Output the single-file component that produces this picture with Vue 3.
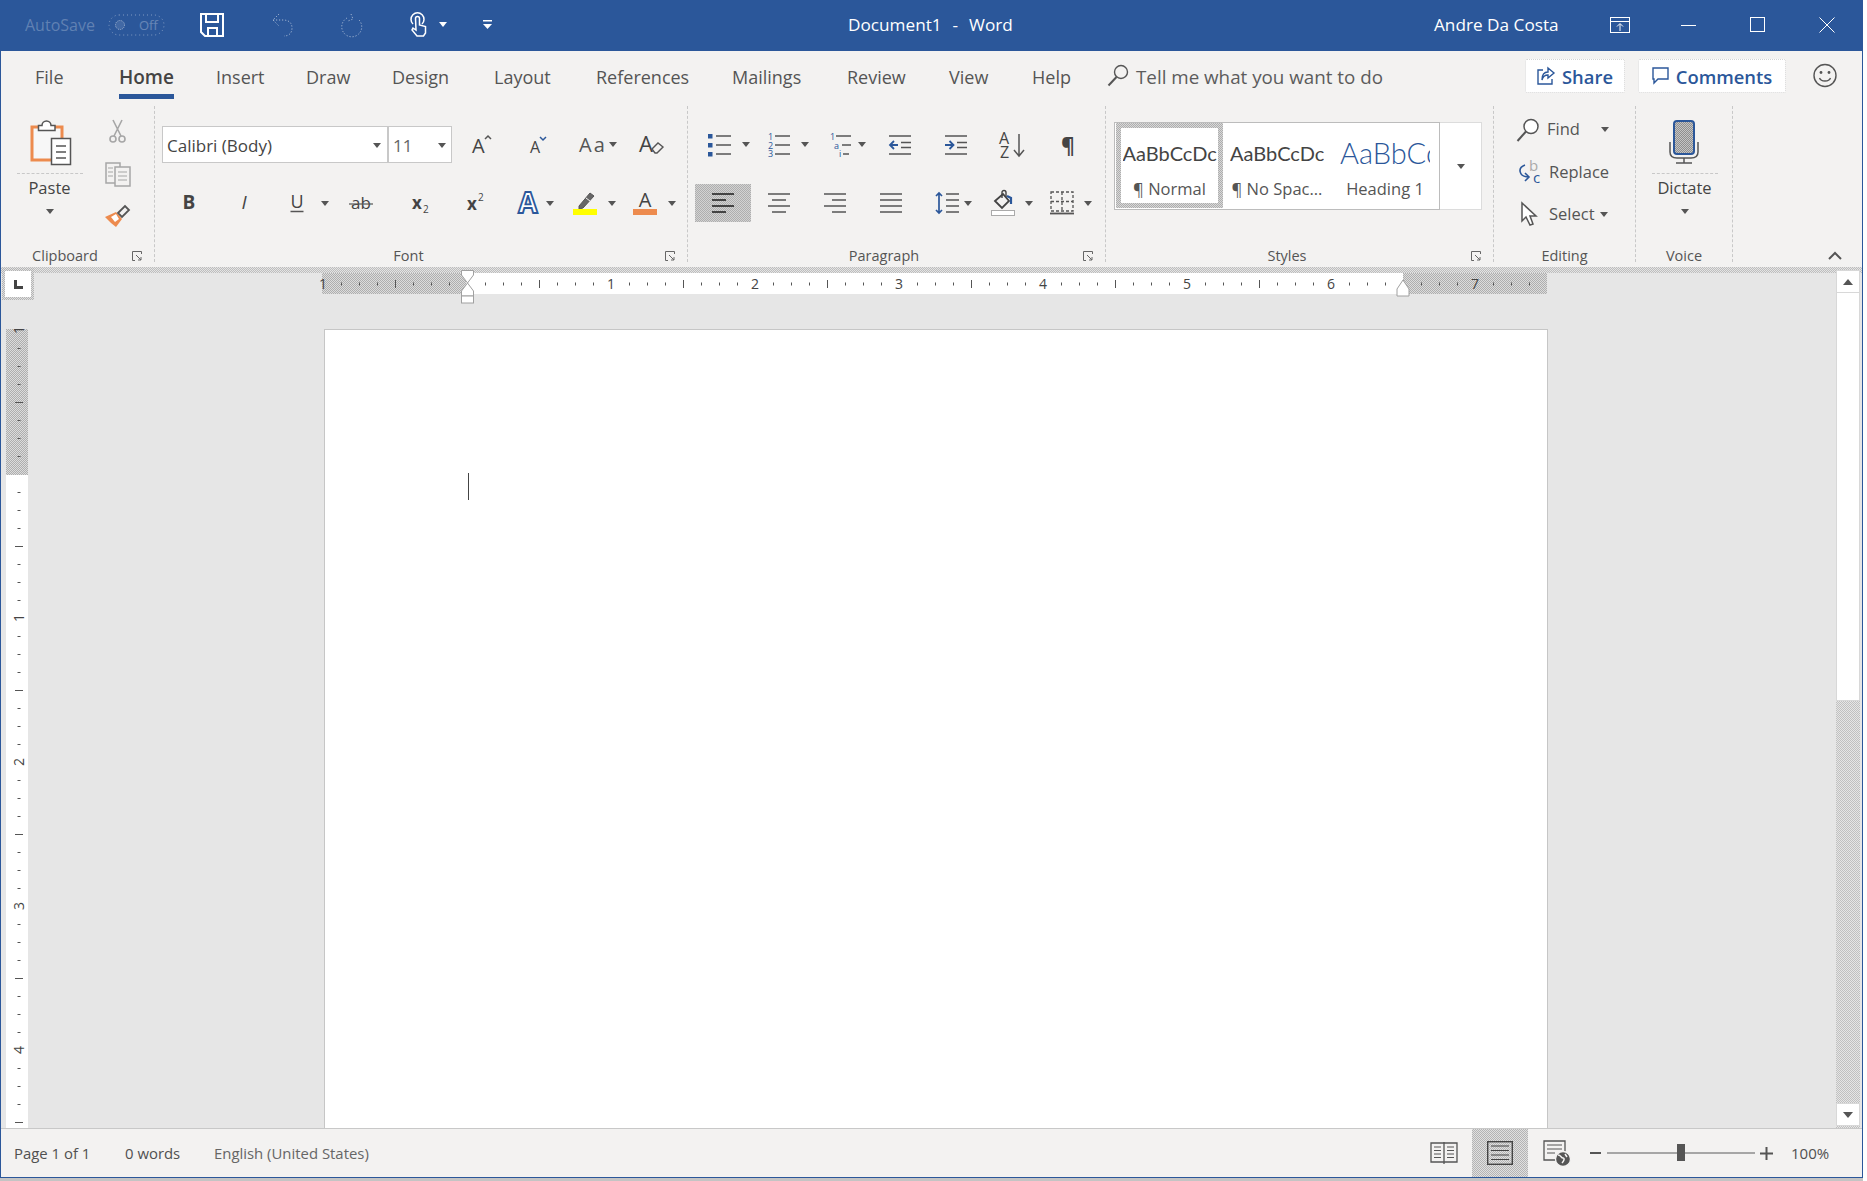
<script setup>
const tabs = ['File', 'Home', 'Insert', 'Draw', 'Design', 'Layout', 'References', 'Mailings', 'Review', 'View', 'Help']

const zeroX = 145
const hTicks = []
for (let i = -8; i <= 59; i++) {
  if (i === 0) continue
  const x = zeroX + i * 18
  if (i % 8 === 0) hTicks.push({ x, label: i < 0 ? String(-i / 8) : String(i / 8) })
  else hTicks.push({ x, h: i % 4 === 0 ? 8 : 3 })
}

const zeroY = 145
const vTicks = []
for (let i = -8; i <= 36; i++) {
  if (i === 0) continue
  const y = zeroY + i * 18
  if (i % 8 === 0) vTicks.push({ y, label: i < 0 ? String(-i / 8) : String(i / 8) })
  else vTicks.push({ y, w: i % 4 === 0 ? 8 : 3 })
}
</script>

<template>
  <div class="screen">
    <div class="window">
      <header class="titlebar">
        <span class="autosave">AutoSave</span>
        <svg width="57" height="24" viewBox="0 0 57 24" class="ghost">
          <rect x="1" y="2" width="55" height="20" rx="10" fill="none" stroke="#fff" stroke-dasharray="1 3" opacity=".4" />
          <circle cx="12" cy="12" r="4.500" fill="#fff" fill-opacity=".2" stroke="#fff" stroke-dasharray="1 1" opacity=".55" />
          <text x="31" y="17" font-size="13" fill="#fff" opacity=".28">Off</text>
        </svg>
        <svg width="24" height="24" viewBox="0 0 24 24" fill="none" stroke="#fff" stroke-width="2">
          <path d="M1 1h22v22H5l-4-4z" /><path d="M6 1v8h12V1" /><path d="M8 23v-8h9v8" />
        </svg>
        <svg width="22" height="24" viewBox="0 0 22 24" fill="none" stroke="#fff" stroke-dasharray="1.2 1.8" opacity=".55">
          <path d="M7 1 1 7l6 6M1 7h10c6 0 9 3 9 8s-3 8-8 8" />
        </svg>
        <svg width="24" height="24" viewBox="0 0 24 24" fill="none" stroke="#fff" stroke-dasharray="1.2 1.8" opacity=".55">
          <path d="M11 1l2 5-5 2M7 5a10 10 0 1 0 11 1" />
        </svg>
        <svg width="18" height="25" viewBox="0 0 18 25" fill="none" stroke="#fff" stroke-width="1.500">
          <path d="M3 12a6.500 6.500 0 1 1 9 0" /><path d="M5.500 6.500a2 2 0 0 1 4 0V13l6 1.500V21l-2 3H7l-5-6 1-2 3 2z" fill="#2b579a" />
        </svg>
        <i class="caret white"></i>
        <svg width="9" height="10" viewBox="0 0 9 10" fill="#fff"><rect y="0" width="9" height="1.500" /><path d="M0 4h9L4.500 9z" /></svg>
        <span class="doc-title">Document1&nbsp; -&nbsp; Word</span>
        <span class="user">Andre Da Costa</span>
        <svg width="20" height="16" viewBox="0 0 20 16" fill="none" stroke="#fff">
          <rect x=".5" y=".5" width="19" height="15" /><path d="M1 4.500h18M10 14V7M7 9.500l3-3 3 3" />
        </svg>
        <svg width="16" height="16" viewBox="0 0 16 16" stroke="#fff"><path d="M0 8.500h15" /></svg>
        <svg width="16" height="16" viewBox="0 0 16 16" fill="none" stroke="#fff"><rect x=".5" y=".5" width="14" height="14" /></svg>
        <svg width="16" height="16" viewBox="0 0 16 16" stroke="#fff"><path d="M.5.500l15 15M15.500.500l-15 15" /></svg>
      </header>

      <nav class="tabbar">
        <span v-for="t in tabs" :key="t" class="tab" :class="{ active: t === 'Home' }">{{ t }}</span>
        <svg width="22" height="24" viewBox="0 0 22 24" fill="none" stroke="#555" stroke-width="1.400">
          <circle cx="14" cy="8" r="6.500" /><path d="M9.500 13 1.500 21.500" stroke-width="2" />
        </svg>
        <span class="tell">Tell me what you want to do</span>
        <span class="action share">
          <svg width="18" height="18" viewBox="0 0 18 18" fill="none" stroke="#2b579a" stroke-width="1.400">
            <path d="M6 3H1v14h14v-5" /><path d="M11 1l6 5-6 5V8c-3 0-5 1-6 5 0-5 2-8 6-8z" />
          </svg>
          Share
        </span>
        <span class="action comments">
          <svg width="17" height="18" viewBox="0 0 17 18" fill="none" stroke="#2b579a" stroke-width="1.400">
            <path d="M1 1h15v11H6l-4 4v-4H1z" />
          </svg>
          Comments
        </span>
        <svg width="24" height="25" viewBox="0 0 24 25" fill="none" stroke="#555" stroke-width="1.400">
          <circle cx="12" cy="12.500" r="11" /><circle cx="8" cy="9.500" r="1.400" fill="#555" stroke="none" /><circle cx="16" cy="9.500" r="1.400" fill="#555" stroke="none" />
          <path d="M6.500 15c1.500 4 9.500 4 11 0" />
        </svg>
      </nav>

      <section class="ribbon">
        <div class="group g-clip">
          <div class="body split">
            <div class="large">
              <svg class="paste-ico" width="42" height="46" viewBox="0 0 42 46">
                <rect x="2" y="7" width="30" height="33" fill="#f7f7f7" stroke="#ed8b4e" stroke-width="3" />
                <path d="M8.500 10.500v-5H12a4.500 4.500 0 0 1 9 0h4v5z" fill="#fff" stroke="#555" stroke-width="1.500" />
                <rect x="21.500" y="18.500" width="19" height="26" fill="#fff" stroke="#555" stroke-width="1.500" />
                <path d="M26 26h10M26 32h10M26 38h10" stroke="#555" stroke-width="1.500" />
              </svg>
              <i class="dash"></i>
              <span class="large-label">Paste</span>
              <i class="caret"></i>
            </div>
            <div class="small-col">
              <svg width="17" height="24" viewBox="0 0 17 24" fill="none" stroke="#a6a6a6" stroke-width="1.600">
                <circle cx="4" cy="20" r="3" /><circle cx="13" cy="20" r="3" /><path d="M5 17 13 1M12 17 4 1" />
              </svg>
              <svg width="26" height="25" viewBox="0 0 26 25" stroke="#a6a6a6" fill="none" stroke-width="1.500">
                <rect x="1" y="1" width="14" height="20" /><rect x="10" y="5" width="15" height="19" fill="#f3f2f1" />
                <path d="M13 10h9M13 14h9M13 18h9M3 6h5M3 10h5M3 14h5" stroke-width="1.200" />
              </svg>
              <svg class="painter" width="26" height="23" viewBox="0 0 26 23">
                <polygon points="1,13 12,8 18,15 12,23 7,19" fill="#ed8b4e" />
                <polygon points="7,13 12,10 15,15 11,18" fill="#fff" />
                <path d="M14 9l7-7 4 4-7 7z" fill="#f3f2f1" stroke="#555" stroke-width="1.800" />
              </svg>
            </div>
          </div>
          <div class="label"><span>Clipboard</span><i class="launch"><svg width="10" height="10" viewBox="0 0 10 10" fill="none" stroke="#666"><path d="M9.500 3V.5H.5v9H3M4 4l5 5M9 6v3H6" /></svg></i></div>
        </div>

        <div class="group g-font">
          <div class="body">
            <div class="row font-row1">
              <div class="combo font-name"><span>Calibri (Body)</span><i class="caret"></i></div>
              <div class="combo font-size"><span>11</span><i class="caret"></i></div>
              <svg width="24" height="24" viewBox="0 0 24 24" class="ico">
                <text x="2" y="20" font-size="20">A</text><path d="M15 6l3-3 3 3" fill="none" stroke="#555" stroke-width="1.500" />
              </svg>
              <svg width="24" height="24" viewBox="0 0 24 24" class="ico">
                <text x="5" y="20" font-size="16">A</text><path d="M15 4l3 3 3-3" fill="none" stroke="#2b579a" stroke-width="1.500" />
              </svg>
              <span class="aa">Aa</span>
              <i class="caret"></i>
              <svg width="24" height="26" viewBox="0 0 24 26" class="ico">
                <text x="0" y="20" font-size="22">A</text><path d="M13 17l6-6 5 4-6 6h-2z" fill="#f3f2f1" stroke="#555" stroke-width="1.400" />
              </svg>
            </div>
            <div class="row font-row2">
              <svg width="24" height="26" viewBox="0 0 24 26" class="ico"><text x="12" y="19" text-anchor="middle" font-size="19" font-weight="700">B</text></svg>
              <svg width="24" height="26" viewBox="0 0 24 26" class="ico"><text x="12" y="19" text-anchor="middle" font-size="19" font-style="italic">I</text></svg>
              <svg width="24" height="26" viewBox="0 0 24 26" class="ico"><text x="12" y="18" text-anchor="middle" font-size="18">U</text><path d="M5.500 21.500h13" stroke="#555" stroke-width="1.500" /></svg>
              <i class="caret"></i>
              <svg width="24" height="26" viewBox="0 0 24 26" class="ico"><text x="12" y="19" text-anchor="middle" font-size="17">ab</text><path d="M0 14h24" stroke="#555" stroke-width="1.200" /></svg>
              <svg width="24" height="26" viewBox="0 0 24 26" class="ico"><text x="4" y="19" font-size="17" font-weight="700">x</text><text x="15" y="23" font-size="10" fill="#2b579a">2</text></svg>
              <svg width="24" height="26" viewBox="0 0 24 26" class="ico"><text x="3" y="20" font-size="17" font-weight="700">x</text><text x="14" y="11" font-size="10" fill="#444">2</text></svg>
              <svg width="24" height="26" viewBox="0 0 24 26"><text x="12" y="23" text-anchor="middle" font-size="28" font-weight="700" fill="#fff" stroke="#2b579a" stroke-width="1.800">A</text></svg>
              <i class="caret"></i>
              <svg width="24" height="26" viewBox="0 0 24 26">
                <path d="M6 16 17 3l4 3-11 12-4 1z" fill="#666" stroke="#555" /><path d="M13 8l4 3" stroke="#f3f2f1" />
                <rect y="19" width="24" height="6" fill="#ffff00" />
              </svg>
              <i class="caret"></i>
              <svg width="24" height="26" viewBox="0 0 24 26" class="ico"><text x="12" y="17" text-anchor="middle" font-size="20">A</text><rect y="19" width="24" height="6" fill="#ed8b4e" /></svg>
              <i class="caret"></i>
            </div>
          </div>
          <div class="label"><span>Font</span><i class="launch"><svg width="10" height="10" viewBox="0 0 10 10" fill="none" stroke="#666"><path d="M9.500 3V.5H.5v9H3M4 4l5 5M9 6v3H6" /></svg></i></div>
        </div>

        <div class="group g-para">
          <div class="body">
            <div class="row para-row1">
              <svg width="24" height="24" viewBox="0 0 24 24" fill="none" stroke="#555" stroke-width="1.500">
                <path d="M8 3h15M8 12h15M8 21h15" /><g fill="#2b579a" stroke="none"><rect x="0" y="1" width="4.500" height="4.500" /><rect x="0" y="10" width="4.500" height="4.500" /><rect x="0" y="19" width="4.500" height="4.500" /></g>
              </svg>
              <i class="caret"></i>
              <svg width="24" height="24" viewBox="0 0 24 24" class="ico-b">
                <path d="M8 3h15M8 12h15M8 21h15" fill="none" stroke="#555" stroke-width="1.500" />
                <text x="1" y="6.500" font-size="9">1</text><text x="1" y="15.500" font-size="9">2</text><text x="1" y="24" font-size="9">3</text>
              </svg>
              <i class="caret"></i>
              <svg width="24" height="24" viewBox="0 0 24 24" class="ico-b">
                <path d="M7 3h15M13 12h9M14 21h6" fill="none" stroke="#555" stroke-width="1.500" />
                <text x="1" y="6.500" font-size="9">1</text><text x="5" y="15.500" font-size="9">a</text><text x="10" y="24" font-size="9">i</text>
              </svg>
              <i class="caret"></i>
              <svg width="24" height="24" viewBox="0 0 24 24" fill="none" stroke="#555" stroke-width="1.500">
                <path d="M1 3h22M13 9.500h10M13 14.500h10M1 21h22" /><path d="M10 12H2M6 8l-4 4 4 4" stroke="#2b579a" stroke-width="1.800" />
              </svg>
              <svg width="24" height="24" viewBox="0 0 24 24" fill="none" stroke="#555" stroke-width="1.500">
                <path d="M1 3h22M13 9.500h10M13 14.500h10M1 21h22" /><path d="M1 12h8M5.500 8l4 4-4 4" stroke="#2b579a" stroke-width="1.800" />
              </svg>
              <svg width="26" height="26" viewBox="0 0 26 26" class="ico">
                <text x="-1" y="12" font-size="16" fill="#2b579a">A</text><text x="0" y="26" font-size="16">Z</text>
                <path d="M19 2v22M14 18l5 6 5-6" fill="none" stroke="#555" stroke-width="1.500" />
              </svg>
              <svg width="24" height="24" viewBox="0 0 24 24" class="ico"><text x="12" y="20" text-anchor="middle" font-size="21" font-weight="700">¶</text></svg>
            </div>
            <div class="row para-row2">
              <div class="active-btn">
                <svg width="24" height="24" viewBox="0 0 24 24" stroke="#444" stroke-width="2"><path d="M1 3h22M1 9h14M1 15h22M1 21h14" /></svg>
              </div>
              <svg width="24" height="24" viewBox="0 0 24 24" stroke="#555" stroke-width="1.500"><path d="M1 3h22M5 9h14M1 15h22M5 21h14" /></svg>
              <svg width="24" height="24" viewBox="0 0 24 24" stroke="#555" stroke-width="1.500"><path d="M1 3h22M9 9h14M1 15h22M9 21h14" /></svg>
              <svg width="24" height="24" viewBox="0 0 24 24" stroke="#555" stroke-width="1.500"><path d="M1 3h22M1 9h22M1 15h22M1 21h22" /></svg>
              <svg width="24" height="24" viewBox="0 0 24 24" fill="none" stroke="#555" stroke-width="1.500">
                <path d="M11 3h13M11 9h13M11 15h13M11 21h13" /><path d="M4 2v20M1 5l3-3 3 3M1 19l3 3 3-3" stroke="#2b579a" stroke-width="1.700" />
              </svg>
              <i class="caret"></i>
              <svg width="24" height="26" viewBox="0 0 24 26" fill="none" stroke="#444" stroke-width="1.800">
                <path d="M4 11l8-7 6 7-7 7z" /><path d="M11 8V2.500a2 2 0 0 1 4 0V7" stroke-width="1.400" /><path d="M20 14V8l-4-2" stroke="#2b579a" stroke-width="2.200" />
                <rect x=".5" y="20.500" width="23" height="5" fill="#fff" stroke="#aaa" stroke-width="1" />
              </svg>
              <i class="caret"></i>
              <svg width="24" height="24" viewBox="0 0 24 24" fill="none" stroke="#555" stroke-width="1.300">
                <path d="M1 1h22v19H1z" stroke-dasharray="3 2" /><path d="M1 10.500h22M12 1v19" stroke-dasharray="3 2" /><path d="M0 22.500h24" stroke-width="1.800" />
              </svg>
              <i class="caret"></i>
            </div>
          </div>
          <div class="label"><span>Paragraph</span><i class="launch"><svg width="10" height="10" viewBox="0 0 10 10" fill="none" stroke="#666"><path d="M9.500 3V.5H.5v9H3M4 4l5 5M9 6v3H6" /></svg></i></div>
        </div>

        <div class="group g-styles">
          <div class="body">
            <div class="gallery">
              <div class="gallery-main">
                <div class="style selected"><span class="preview">AaBbCcDc</span><span class="style-name">¶ Normal</span></div>
                <div class="style"><span class="preview">AaBbCcDc</span><span class="style-name">¶ No Spac...</span></div>
                <div class="style"><span class="preview heading">AaBbCcDc</span><span class="style-name">Heading 1</span></div>
              </div>
              <div class="gallery-more"><i class="caret"></i></div>
            </div>
          </div>
          <div class="label"><span>Styles</span><i class="launch"><svg width="10" height="10" viewBox="0 0 10 10" fill="none" stroke="#666"><path d="M9.500 3V.5H.5v9H3M4 4l5 5M9 6v3H6" /></svg></i></div>
        </div>

        <div class="group g-edit">
          <div class="body edit-body">
            <div class="edit-row find">
              <svg width="24" height="24" viewBox="0 0 24 24" fill="none" stroke="#555" stroke-width="1.500">
                <circle cx="15" cy="8.500" r="7" fill="#fff" /><path d="M10 13.500 1.500 23" stroke-width="2" />
              </svg>
              <span>Find</span><i class="caret"></i>
            </div>
            <div class="edit-row replace">
              <svg width="24" height="24" viewBox="0 0 24 24">
                <text x="11" y="11" font-size="15" fill="#aaa">b</text><text x="15" y="23" font-size="15" fill="#2b579a">c</text>
                <path d="M7 5c-8 3-6 12 4 12M7 13l4 4-4 4" fill="none" stroke="#2b579a" stroke-width="1.600" />
              </svg>
              <span>Replace</span>
            </div>
            <div class="edit-row select">
              <svg width="17" height="24" viewBox="0 0 17 24" fill="#fff" stroke="#555" stroke-width="1.500">
                <path d="M1 1v18l4-4 4 8 3-1-3-8h6z" />
              </svg>
              <span>Select</span><i class="caret"></i>
            </div>
          </div>
          <div class="label plain"><span>Editing</span></div>
        </div>

        <div class="group g-voice">
          <div class="body">
            <div class="large">
              <svg class="mic" width="30" height="46" viewBox="0 0 30 46" fill="none">
                <defs>
                  <pattern id="dm" width="2" height="2" patternUnits="userSpaceOnUse">
                    <rect width="2" height="2" fill="#c4c4c4" /><rect width="1" height="1" fill="#8f8f8f" /><rect x="1" y="1" width="1" height="1" fill="#8f8f8f" />
                  </pattern>
                </defs>
                <rect x="5" y="1" width="20" height="33" rx="3" fill="url(#dm)" stroke="#2b579a" stroke-width="2" />
                <path d="M1 22v10c0 4 3 6 7 6h14c4 0 7-2 7-6V22M15 38v5M7 43h16" stroke="#555" stroke-width="1.500" />
              </svg>
              <i class="dash"></i>
              <span class="large-label">Dictate</span>
              <i class="caret"></i>
            </div>
          </div>
          <div class="label plain"><span>Voice</span></div>
        </div>

        <div class="collapse">
          <svg width="14" height="9" viewBox="0 0 14 9" fill="none" stroke="#555" stroke-width="2"><path d="M1 8l6-6 6 6" /></svg>
        </div>
      </section>

      <div class="band"></div>

      <main class="workspace">
        <div class="doc-col">
          <div class="top-row">
            <div class="corner"><div class="corner-in"><i class="tab-stop"></i></div></div>
            <svg class="h-ruler" width="1226" height="40" viewBox="0 0 1226 40">
              <defs>
                <pattern id="dh" width="2" height="2" patternUnits="userSpaceOnUse">
                  <rect width="2" height="2" fill="#dcdcdc" /><rect width="1" height="1" fill="#aeaeae" /><rect x="1" y="1" width="1" height="1" fill="#aeaeae" />
                </pattern>
              </defs>
              <rect x="0" y="5" width="144" height="21" fill="url(#dh)" />
              <rect x="144" y="5" width="937" height="21" fill="#fff" />
              <rect x="1081" y="5" width="144" height="21" fill="url(#dh)" />
              <g v-for="t in hTicks" :key="t.x">
                <text v-if="t.label" :x="t.x" y="21" text-anchor="middle" class="ruler-num">{{ t.label }}</text>
                <rect v-else :x="t.x" :y="16 - t.h / 2" width="1" :height="t.h" fill="#555" />
              </g>
              <g fill="#fff" stroke="#a0a0a0">
                <path d="M139.500 2.500h12V7l-6 8-6-8z" />
                <path d="M145.500 15l6 8v5h-12v-5z" />
                <rect x="139.500" y="28" width="12" height="7" />
                <path d="M1081 12l6 9v7h-12v-7z" />
              </g>
            </svg>
          </div>
          <div class="doc-row">
            <svg class="v-ruler" width="22" height="801" viewBox="0 0 22 801">
              <defs>
                <pattern id="dv" width="2" height="2" patternUnits="userSpaceOnUse">
                  <rect width="2" height="2" fill="#dcdcdc" /><rect width="1" height="1" fill="#aeaeae" /><rect x="1" y="1" width="1" height="1" fill="#aeaeae" />
                </pattern>
              </defs>
              <rect width="22" height="146" fill="url(#dv)" />
              <rect y="146" width="22" height="655" fill="#fff" />
              <g v-for="t in vTicks" :key="t.y">
                <text v-if="t.label" x="0" y="0" text-anchor="middle" class="ruler-num" :transform="`translate(18 ${t.y}) rotate(-90)`">{{ t.label }}</text>
                <rect v-else :x="13 - t.w / 2" :y="t.y" :width="t.w" height="1" fill="#555" />
              </g>
            </svg>
            <div class="page"><i class="cursor"></i></div>
          </div>
        </div>
        <aside class="scrollbar">
          <div class="sb-btn"><i class="tri-up"></i></div>
          <div class="sb-thumb"></div>
          <div class="sb-track"></div>
          <div class="sb-btn"><i class="tri-down"></i></div>
          <div class="sb-tail"></div>
        </aside>
      </main>

      <footer class="status">
        <span>Page 1 of 1</span>
        <span>0 words</span>
        <span class="lang">English (United States)</span>
        <svg width="28" height="24" viewBox="0 0 28 24" fill="none" stroke="#555" stroke-width="1.300">
          <path d="M1 2h26v19H1zM14 1v22" /><path d="M4 6h7M4 9.500h7M4 13h7M4 16.500h7M17 6h7M17 9.500h7M17 13h7M17 16.500h7" stroke-width="1" />
        </svg>
        <div class="status-active">
          <svg width="26" height="24" viewBox="0 0 26 24" fill="none" stroke="#444" stroke-width="1.400">
            <rect x=".7" y=".7" width="24.600" height="22.600" /><path d="M4 5h18M4 9.500h18M4 14h18M4 18.500h18" stroke-width="1.200" />
          </svg>
        </div>
        <svg width="28" height="27" viewBox="0 0 28 27" fill="none" stroke="#555" stroke-width="1.300">
          <path d="M12 20H1V1h21v11" /><path d="M4 5h15M4 9h15M4 13h8" stroke-width="1" />
          <circle cx="20" cy="19" r="7.500" fill="#555" stroke="#f3f2f1" /><path d="M15 15c3 0 3 3 5 3s1 3-1 5M22 14l2 3" stroke="#f3f2f1" stroke-width="1.500" />
        </svg>
        <i class="zoom-minus"></i>
        <div class="slider"><i class="knob"></i></div>
        <svg width="13" height="13" viewBox="0 0 13 13" stroke="#555" stroke-width="2"><path d="M0 6.500h13M6.500 0v13" /></svg>
        <span class="pct">100%</span>
      </footer>
    </div>
  </div>
</template>

<style>
body { margin: 0; background: #fff; }
</style>

<style scoped>
.screen {
  width: 1867px;
  height: 1181px;
  background: #fff;
  overflow: hidden;
  font-family: "Open Sans", "Noto Sans", sans-serif;
  color: #444;
}
.window {
  box-sizing: border-box;
  width: 1863px;
  height: 1178px;
  border: 1px solid #2b579a;
  border-top: 0;
  display: flex;
  flex-direction: column;
  background: #f3f2f1;
  box-shadow: 0 3px 0 #c4c4c4;
}
i { display: block; font-style: normal; }
svg { display: block; overflow: visible; }
svg text { font-family: "Open Sans", "Noto Sans", sans-serif; }

/* title bar */
.titlebar {
  height: 51px;
  flex: none;
  box-sizing: border-box;
  background: #2b579a;
  color: #fff;
  display: grid;
  grid-template-columns: 83px 92px 72px 68px 70px 29px 44px 365px 586px 176px 71px 69px 69px 1fr;
  justify-items: start;
  align-items: center;
  padding: 0 0 2px 24px;
  font-size: 17.200px;
}
.autosave { color: rgba(255, 255, 255, .26); font-size: 16px; }
.doc-title, .user { white-space: nowrap; }
.doc-title { word-spacing: 1px; }

/* carets */
.caret {
  width: 0;
  height: 0;
  border-left: 4.500px solid transparent;
  border-right: 4.500px solid transparent;
  border-top: 5px solid #555;
}
.caret.white { border-top-color: #fff; }

/* tabs */
.tabbar {
  height: 49px;
  flex: none;
  box-sizing: border-box;
  display: grid;
  grid-template-columns: 84px 97px 90px 86px 102px 102px 136px 115px 102px 83px 75px 29px 389px 113px 175px 1fr;
  justify-items: start;
  align-items: center;
  padding-left: 34px;
  font-size: 18px;
  color: #555;
}
.tab { position: relative; line-height: 49px; height: 49px; padding-top: 2px; box-sizing: border-box; white-space: nowrap; }
.tab.active { color: #444; font-weight: 600; font-size: 19px; }
.tab.active::after {
  content: "";
  position: absolute;
  left: 0;
  right: 0;
  bottom: 1px;
  height: 5px;
  background: #2b579a;
}
.tell { font-size: 18.800px; color: #5c5c5c; white-space: nowrap; padding-top: 2px; }
.action {
  box-sizing: border-box;
  height: 34px;
  display: flex;
  align-items: center;
  justify-content: center;
  gap: 7px;
  padding-top: 1px;
  background: #fff;
  border: 1px dotted #d4d4d4;
  border-radius: 2px;
  color: #2b579a;
  font-size: 18.400px;
  font-weight: 600;
  white-space: nowrap;
}
.share { width: 100px; }
.comments { width: 148px; }

/* ribbon */
.ribbon {
  height: 167px;
  flex: none;
  box-sizing: border-box;
  padding-top: 6px;
  display: flex;
  font-size: 15.500px;
}
.group {
  box-sizing: border-box;
  height: 156px;
  border-right: 1px dashed #c8c8c8;
  display: flex;
  flex-direction: column;
}
.g-clip { width: 154px; }
.g-font { width: 533px; }
.g-para { width: 418px; }
.g-styles { width: 388px; }
.g-edit { width: 142px; }
.g-voice { width: 97px; }
.body { flex: 1; min-height: 0; }
.label {
  height: 12px;
  line-height: 12px;
  flex: none;
  display: flex;
  font-size: 14.500px;
  color: #555;
}
.label span { flex: 1; text-align: center; white-space: nowrap; }
.launch { width: 25px; padding: 1px 0 0 3px; box-sizing: border-box; }

/* clipboard + voice */
.split { display: flex; }
.large {
  width: 67px;
  margin-left: 15px;
  padding-top: 14px;
  display: flex;
  flex-direction: column;
  align-items: center;
}
.paste-ico { margin-left: 3px; }
.mic { margin-left: -2px; }
.dash { width: 66px; height: 0; border-top: 1px dashed #c8c8c8; margin-top: 7px; }
.large-label { line-height: 28px; font-size: 16.500px; }
.large .caret { margin-top: 7px; }
.small-col {
  width: 27px;
  margin-left: 21px;
  padding-top: 3px;
  display: grid;
  grid-template-rows: 44px 42px 40px;
  justify-items: center;
  align-items: center;
}
.painter { margin-left: -2px; }

/* rows */
.row { display: grid; justify-items: start; align-items: center; }
.ico text { fill: #444; }
.ico-b text { fill: #2b579a; }
.font-row1 {
  margin: 20px 0 0 7px;
  height: 37px;
  grid-template-columns: 226px 82px 55px 54px 30px 30px 24px;
}
.font-row2 {
  margin: 21px 0 0 22px;
  height: 38px;
  grid-template-columns: 55px 53px 36px 28px 59px 56px 52px 30px 27px 35px 25px 35px 9px;
}
.combo {
  box-sizing: border-box;
  height: 37px;
  background: #fff;
  border: 1px solid #c8c8c8;
  display: flex;
  align-items: center;
  justify-content: space-between;
  font-size: 17px;
  padding: 1px 6px 0 4px;
}
.font-name { width: 226px; }
.font-size { width: 64px; padding-right: 5px; color: #666; }
.aa { font-size: 20px; letter-spacing: 2px; color: #555; }
.para-row1 {
  margin: 20px 0 0 20px;
  height: 37px;
  grid-template-columns: 34px 25px 34px 28px 29px 30px 56px 56px 56px 24px;
}
.para-row2 {
  margin: 21px 0 0 7px;
  height: 38px;
  grid-template-columns: 72px 56px 56px 56px 29px 27px 34px 25px 34px 9px;
}
.active-btn {
  width: 56px;
  height: 38px;
  display: flex;
  align-items: center;
  justify-content: center;
  background: repeating-conic-gradient(#aeaeae 0 25%, #d2d2d2 0 50%) 0 0 / 2px 2px;
}

/* styles */
.gallery {
  margin: 16px 0 0 8px;
  display: flex;
  height: 88px;
}
.gallery-main {
  box-sizing: border-box;
  width: 326px;
  background: #fff;
  border: 1px solid #bcbcbc;
  display: flex;
  padding-left: 1px;
}
.gallery-more {
  box-sizing: border-box;
  width: 42px;
  background: #fff;
  border: 1px solid #dcdcdc;
  border-left: 0;
  display: flex;
  align-items: center;
  justify-content: center;
}
.style {
  box-sizing: border-box;
  width: 108px;
  height: 86px;
  display: flex;
  flex-direction: column;
  align-items: center;
  padding-top: 12px;
  overflow: hidden;
}
.style.selected {
  padding-top: 0;
  border: 5px solid transparent;
  background:
    linear-gradient(#fff, #fff) padding-box,
    repeating-conic-gradient(#aeaeae 0 25%, #d8d8d8 0 50%) 0 0 / 2px 2px border-box;
  height: 85px;
  width: 107px;
  justify-content: flex-start;
}
.style.selected .preview { margin-top: 7px; }
.preview {
  display: block;
  box-sizing: border-box;
  width: 94px;
  height: 38px;
  line-height: 36px;
  text-align: center;
  overflow: hidden;
  white-space: nowrap;
  font-family: Lato, "Open Sans", sans-serif;
  font-size: 20px;
  color: #444;
  flex: none;
}
.preview.heading {
  text-align: left;
  width: 90px;
  font-size: 29px;
  font-weight: 300;
  color: #2b579a;
}
.style-name { font-size: 16.500px; line-height: 24px; color: #555; margin-top: 4px; white-space: nowrap; }

/* editing */
.edit-body { padding-top: 2px; }
.edit-row {
  display: grid;
  height: 42px;
  align-items: center;
  justify-items: start;
  font-size: 16.500px;
  color: #555;
  line-height: 1;
}
.find { margin-left: 22px; height: 43px; grid-template-columns: 31px 54px 9px; }
.replace { margin-left: 24px; grid-template-columns: 31px auto; }
.select { margin-left: 27px; grid-template-columns: 28px 51px 9px; }

.collapse {
  flex: 1;
  height: 156px;
  display: flex;
  align-items: flex-end;
  justify-content: flex-end;
  padding: 0 20px 2px 0;
  box-sizing: border-box;
}

.band {
  height: 6px;
  flex: none;
  background: repeating-conic-gradient(#bdbdbd 0 25%, #e4e4e4 0 50%) 0 0 / 2px 2px;
}

/* workspace */
.workspace {
  flex: 1;
  min-height: 0;
  display: flex;
  background: #e6e6e6;
}
.doc-col {
  width: 1835px;
  flex: none;
  display: flex;
  flex-direction: column;
  min-height: 0;
}
.top-row { display: flex; height: 56px; flex: none; }
.corner {
  margin: -5px 0 0 1px;
  width: 32px;
  height: 32px;
  padding: 3px;
  box-sizing: border-box;
  background: repeating-conic-gradient(#b4b4b4 0 25%, #e0e0e0 0 50%) 0 0 / 2px 2px;
  position: relative;
  z-index: 1;
}
.corner-in {
  width: 26px;
  height: 26px;
  background: #fff;
  display: flex;
  align-items: center;
  justify-content: center;
}
.tab-stop {
  width: 9px;
  height: 9px;
  box-sizing: border-box;
  border-left: 3px solid #444;
  border-bottom: 3px solid #444;
}
.h-ruler {
  margin: -5px 0 0 288px;
  flex: none;
  position: relative;
  z-index: 2;
}
.ruler-num { font-size: 14px; fill: #444; }
.doc-row { flex: 1; min-height: 0; display: flex; overflow: hidden; padding-left: 5px; }
.v-ruler { flex: none; overflow: hidden; }
.page {
  box-sizing: border-box;
  margin-left: 296px;
  width: 1224px;
  background: #fff;
  border: 1px solid #c6c6c6;
  border-bottom: 0;
  padding: 143px 0 0 143px;
  flex: none;
}
.cursor { width: 1px; height: 27px; background: #444; }

.scrollbar {
  width: 24px;
  margin-top: -3px;
  flex: none;
  display: flex;
  flex-direction: column;
  position: relative;
  z-index: 2;
}
.sb-btn {
  box-sizing: border-box;
  height: 23px;
  flex: none;
  background: #fff;
  border: 1px solid #d8d8d8;
  display: flex;
  align-items: center;
  justify-content: center;
}
.sb-thumb { height: 408px; flex: none; background: #fff; border: 1px solid #d8d8d8; border-top: 0; box-sizing: border-box; }
.sb-track, .sb-tail { background: repeating-conic-gradient(#c0c0c0 0 25%, #e6e6e6 0 50%) 0 0 / 2px 2px; }
.sb-track { flex: 1; }
.sb-tail { height: 2px; flex: none; }
.tri-up, .tri-down {
  width: 0;
  height: 0;
  border-left: 5.500px solid transparent;
  border-right: 5.500px solid transparent;
}
.tri-up { border-bottom: 6px solid #555; }
.tri-down { border-top: 6px solid #555; }

/* status */
.status {
  box-sizing: border-box;
  height: 49px;
  flex: none;
  border-top: 1px solid #c8c8c8;
  display: grid;
  grid-template-columns: 111px 89px 1216px 42px 71px 47px 17px 153px 31px 1fr;
  justify-items: start;
  align-items: center;
  padding-left: 13px;
  font-size: 14.900px;
  color: #505050;
}
.status span { white-space: nowrap; }
.lang { color: #666; }
.status-active {
  width: 56px;
  height: 48px;
  display: flex;
  align-items: center;
  justify-content: center;
  background: repeating-conic-gradient(#b4b4b4 0 25%, #e0e0e0 0 50%) 0 0 / 2px 2px;
}
.zoom-minus { width: 11px; height: 2px; background: #555; }
.slider {
  width: 148px;
  height: 2px;
  background: #a6a6a6;
  position: relative;
}
.knob {
  position: absolute;
  left: 70px;
  top: -8px;
  width: 8px;
  height: 17px;
  background: #555;
}
.pct { font-size: 15px; }
</style>
